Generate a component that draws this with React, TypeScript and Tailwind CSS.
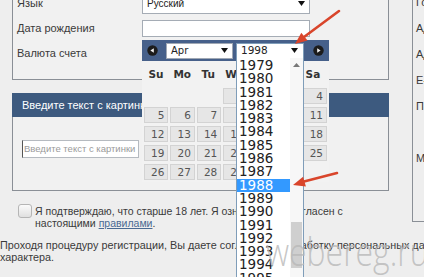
import React from "react";

const Tri = ({ color = "#111" }: { color?: string }) => (
  <svg width="7" height="5" viewBox="0 0 7 5" className="shrink-0">
    <path d="M0 0H7L3.5 5Z" fill={color} />
  </svg>
);

const CircleIcon = ({ dir }: { dir: "w" | "e" }) => (
  <svg width="11" height="11" viewBox="0 0 11 11" className="shrink-0">
    <circle cx="5.5" cy="5.5" r="5.2" fill="#1c1c1c" />
    {dir === "w" ? (
      <path d="M3.4 5.5L6.8 3.2V7.8Z" fill="#f2f2f2" />
    ) : (
      <path d="M7.6 5.5L4.2 3.2V7.8Z" fill="#f2f2f2" />
    )}
  </svg>
);

export default function App() {
  const years = Array.from({ length: 17 }, (_, i) => 1979 + i);
  const days: (number | null)[] = [
    null,
    null,
    null,
    ...Array.from({ length: 30 }, (_, i) => i + 1),
  ];
  const dayNames = ["Su", "Mo", "Tu", "We", "Th", "Fr", "Sa"];
  const rightLabels = ["Город", "Адрес", "Адрес", "E-mail", "Пароль"];

  return (
    <div className="relative w-[424px] h-[277px] overflow-hidden bg-[#eeeeee] text-[11px] text-[#3a3a3a] font-['Liberation_Sans',Arial,sans-serif]">
      <div className="flex items-start">
        {/* left column */}
        <div className="ml-[12px] w-[377px] shrink-0">
          {/* panel 1 */}
          <div className="mt-[-22px] border border-[#8a8f96] bg-[#f1f1f1] pt-[12px] pb-[13px] pl-[4px]">
            <div className="flex h-[25px] items-center">
              <div className="w-[125px]">Язык</div>
              <div className="flex h-[20px] w-[168px] items-center justify-between border border-[#a5acb5] bg-white pl-[4px] pr-[4px] text-[10px] text-[#222]">
                <span>Русский</span>
                <Tri />
              </div>
            </div>
            <div className="flex h-[25px] items-center">
              <div className="w-[125px]">Дата рождения</div>
              <div className="h-[17px] w-[168px] border border-[#a5acb5] bg-white" />
            </div>
            <div className="flex h-[25px] items-center">
              <div className="w-[125px]">Валюта счета</div>
              <div className="flex h-[20px] w-[168px] items-center justify-between border border-[#a5acb5] bg-white pl-[4px] pr-[4px] text-[10px]">
                <span>RUB</span>
                <Tri />
              </div>
            </div>
          </div>

          {/* panel 2 */}
          <div className="mt-[13px]">
            <div className="flex h-[24px] items-center bg-[#3d5a7f] pl-[10px] text-[11px] text-white">
              Введите текст с картинки
            </div>
            <div className="h-[74px] border-x border-b border-[#8a8f96] bg-[#f1f1f1] pt-[23px] pl-[9px]">
              <div className="flex h-[18px] w-[117px] items-center overflow-hidden whitespace-nowrap border border-[#b5bac0] border-l-[#555] bg-white pl-[1px] text-[9.5px] text-[#9a9a9a]">
                Введите текст с картинки
              </div>
            </div>
          </div>

          {/* checkbox row */}
          <div className="mt-[14px] flex pl-[6px]">
            <div className="mt-[-1px] h-[14px] w-[14px] shrink-0 rounded-[3px] border border-[#b5b5b5] bg-gradient-to-b from-[#fbfbfb] to-[#e0e0e0]" />
            <div className="ml-[3px] whitespace-nowrap text-[10.5px] leading-[12px]">
              Я подтверждаю, что старше 18 лет. Я ознакомлен и согласен с
              <br />
              настоящими{" "}
              <span className="text-[#4a6a92] underline">правилами</span>.
            </div>
          </div>
        </div>

        {/* right column */}
        <div className="ml-[23px] mt-[-11px] h-[233px] flex-1 border-l border-b border-[#8a8f96] pl-[3px] whitespace-nowrap">
          {rightLabels.map((l, i) => (
            <div key={i} className="flex h-[26px] items-center">
              {l}
            </div>
          ))}
          <div className="h-[26px]" />
          <div className="flex h-[26px] items-center">Мобильный</div>
        </div>
      </div>

      {/* paragraph */}
      <div className="mt-[10px] whitespace-nowrap text-[10.8px] leading-[12px]">
        Проходя процедуру регистрации, Вы даете согласие на обработку персональных данных
        <br />
        характера.
      </div>

      <div className="mt-[15px] flex pl-[12px]">
        <div className="flex h-[14px] w-[14px] shrink-0 items-center justify-center rounded-[3px] border border-[#b5b5b5] bg-gradient-to-b from-[#fbfbfb] to-[#e0e0e0] text-[10px] leading-none text-[#333]">
          ✓
        </div>
        <div className="ml-[4px] whitespace-nowrap text-[10.5px] leading-[14px]">
          Я хочу получать новости и уведомления
        </div>
      </div>

      {/* datepicker overlay */}
      <div className="absolute left-[142px] top-[40px] h-[142px] w-[187px] bg-[#f2f2f2]">
        <div className="flex h-[21px] items-center bg-[#46608a] pl-[5px]">
          <CircleIcon dir="w" />
          <div className="ml-[8px] flex h-[16px] w-[67px] items-center justify-between border border-[#a0a8b4] bg-white pl-[4px] pr-[4px] font-['DejaVu_Sans',sans-serif] text-[10px] text-[#222]">
            <span>Apr</span>
            <Tri />
          </div>
          <div className="ml-[3px] flex h-[16px] w-[68px] items-center justify-between border border-[#7f9db9] bg-white pl-[4px] pr-[5px] font-['DejaVu_Sans',sans-serif] text-[10.5px] text-[#222]">
            <span>1998</span>
            <Tri />
          </div>
          <div className="ml-[9px]">
            <CircleIcon dir="e" />
          </div>
        </div>
        <div className="grid h-[27px] w-[183px] grid-cols-7 items-center gap-x-[2px] pl-[2px] font-['DejaVu_Sans',sans-serif] text-[10.5px] font-bold text-[#333]">
          {dayNames.map((d) => (
            <div key={d} className="text-center">
              {d}
            </div>
          ))}
        </div>
        <div className="grid w-[185px] grid-cols-7 gap-x-[2px] gap-y-[3px] pl-[2px] font-['DejaVu_Sans',sans-serif] text-[10.5px] text-[#555]">
          {days.map((d, i) =>
            d === null ? (
              <div key={i} className="h-[16px]" />
            ) : (
              <div
                key={i}
                className="h-[16px] border border-[#d3d3d3] bg-[#e6e6e6] pr-[3px] text-right leading-[14px]"
              >
                {d}
              </div>
            )
          )}
        </div>
      </div>

      {/* year dropdown */}
      <div className="absolute left-[236px] top-[58px] flex h-[222px] w-[68px] border-x border-[#7f9db9] bg-white">
        <div className="w-[53px] pt-[1px] font-['DejaVu_Sans',sans-serif] text-[13.5px] text-[#222]">
          {years.map((y) => (
            <div
              key={y}
              className={
                y === 1988
                  ? "h-[13.3px] bg-[#3399ff] pl-[2px] leading-[13.3px] text-white"
                  : "h-[13.3px] pl-[2px] leading-[13.3px]"
              }
            >
              {y}
            </div>
          ))}
        </div>
        <div className="relative w-[13px] bg-[#f7f7f7]">
          <div className="absolute left-[3px] top-[5px]">
            <svg width="7" height="4" viewBox="0 0 7 4">
              <path d="M0 4H7L3.5 0Z" fill="#777" />
            </svg>
          </div>
          <div className="absolute left-[1px] top-[164px] h-[46px] w-[11px] bg-[#cfcfcf]" />
        </div>
      </div>

      {/* watermark */}
      <div className="pointer-events-none absolute left-[266px] top-[232px] origin-left scale-x-[0.84] whitespace-nowrap font-['Open_Sans',sans-serif] text-[38px] font-light leading-none text-[#b8b8b8]/80">
        webereg.ru
      </div>

      {/* red arrows */}
      <svg
        className="pointer-events-none absolute left-0 top-0"
        width="424"
        height="277"
        viewBox="0 0 424 277"
      >
        <line x1="339" y1="11" x2="304" y2="37" stroke="#d9452b" strokeWidth="2.6" strokeLinecap="round" />
        <path d="M295 44L307.5 40.5L301.3 32.7Z" fill="#d9452b" />
        <line x1="337" y1="173" x2="304" y2="181.6" stroke="#d9452b" strokeWidth="2.6" strokeLinecap="round" />
        <path d="M293 185L305.9 186.4L303.1 176.8Z" fill="#d9452b" />
      </svg>
    </div>
  );
}
